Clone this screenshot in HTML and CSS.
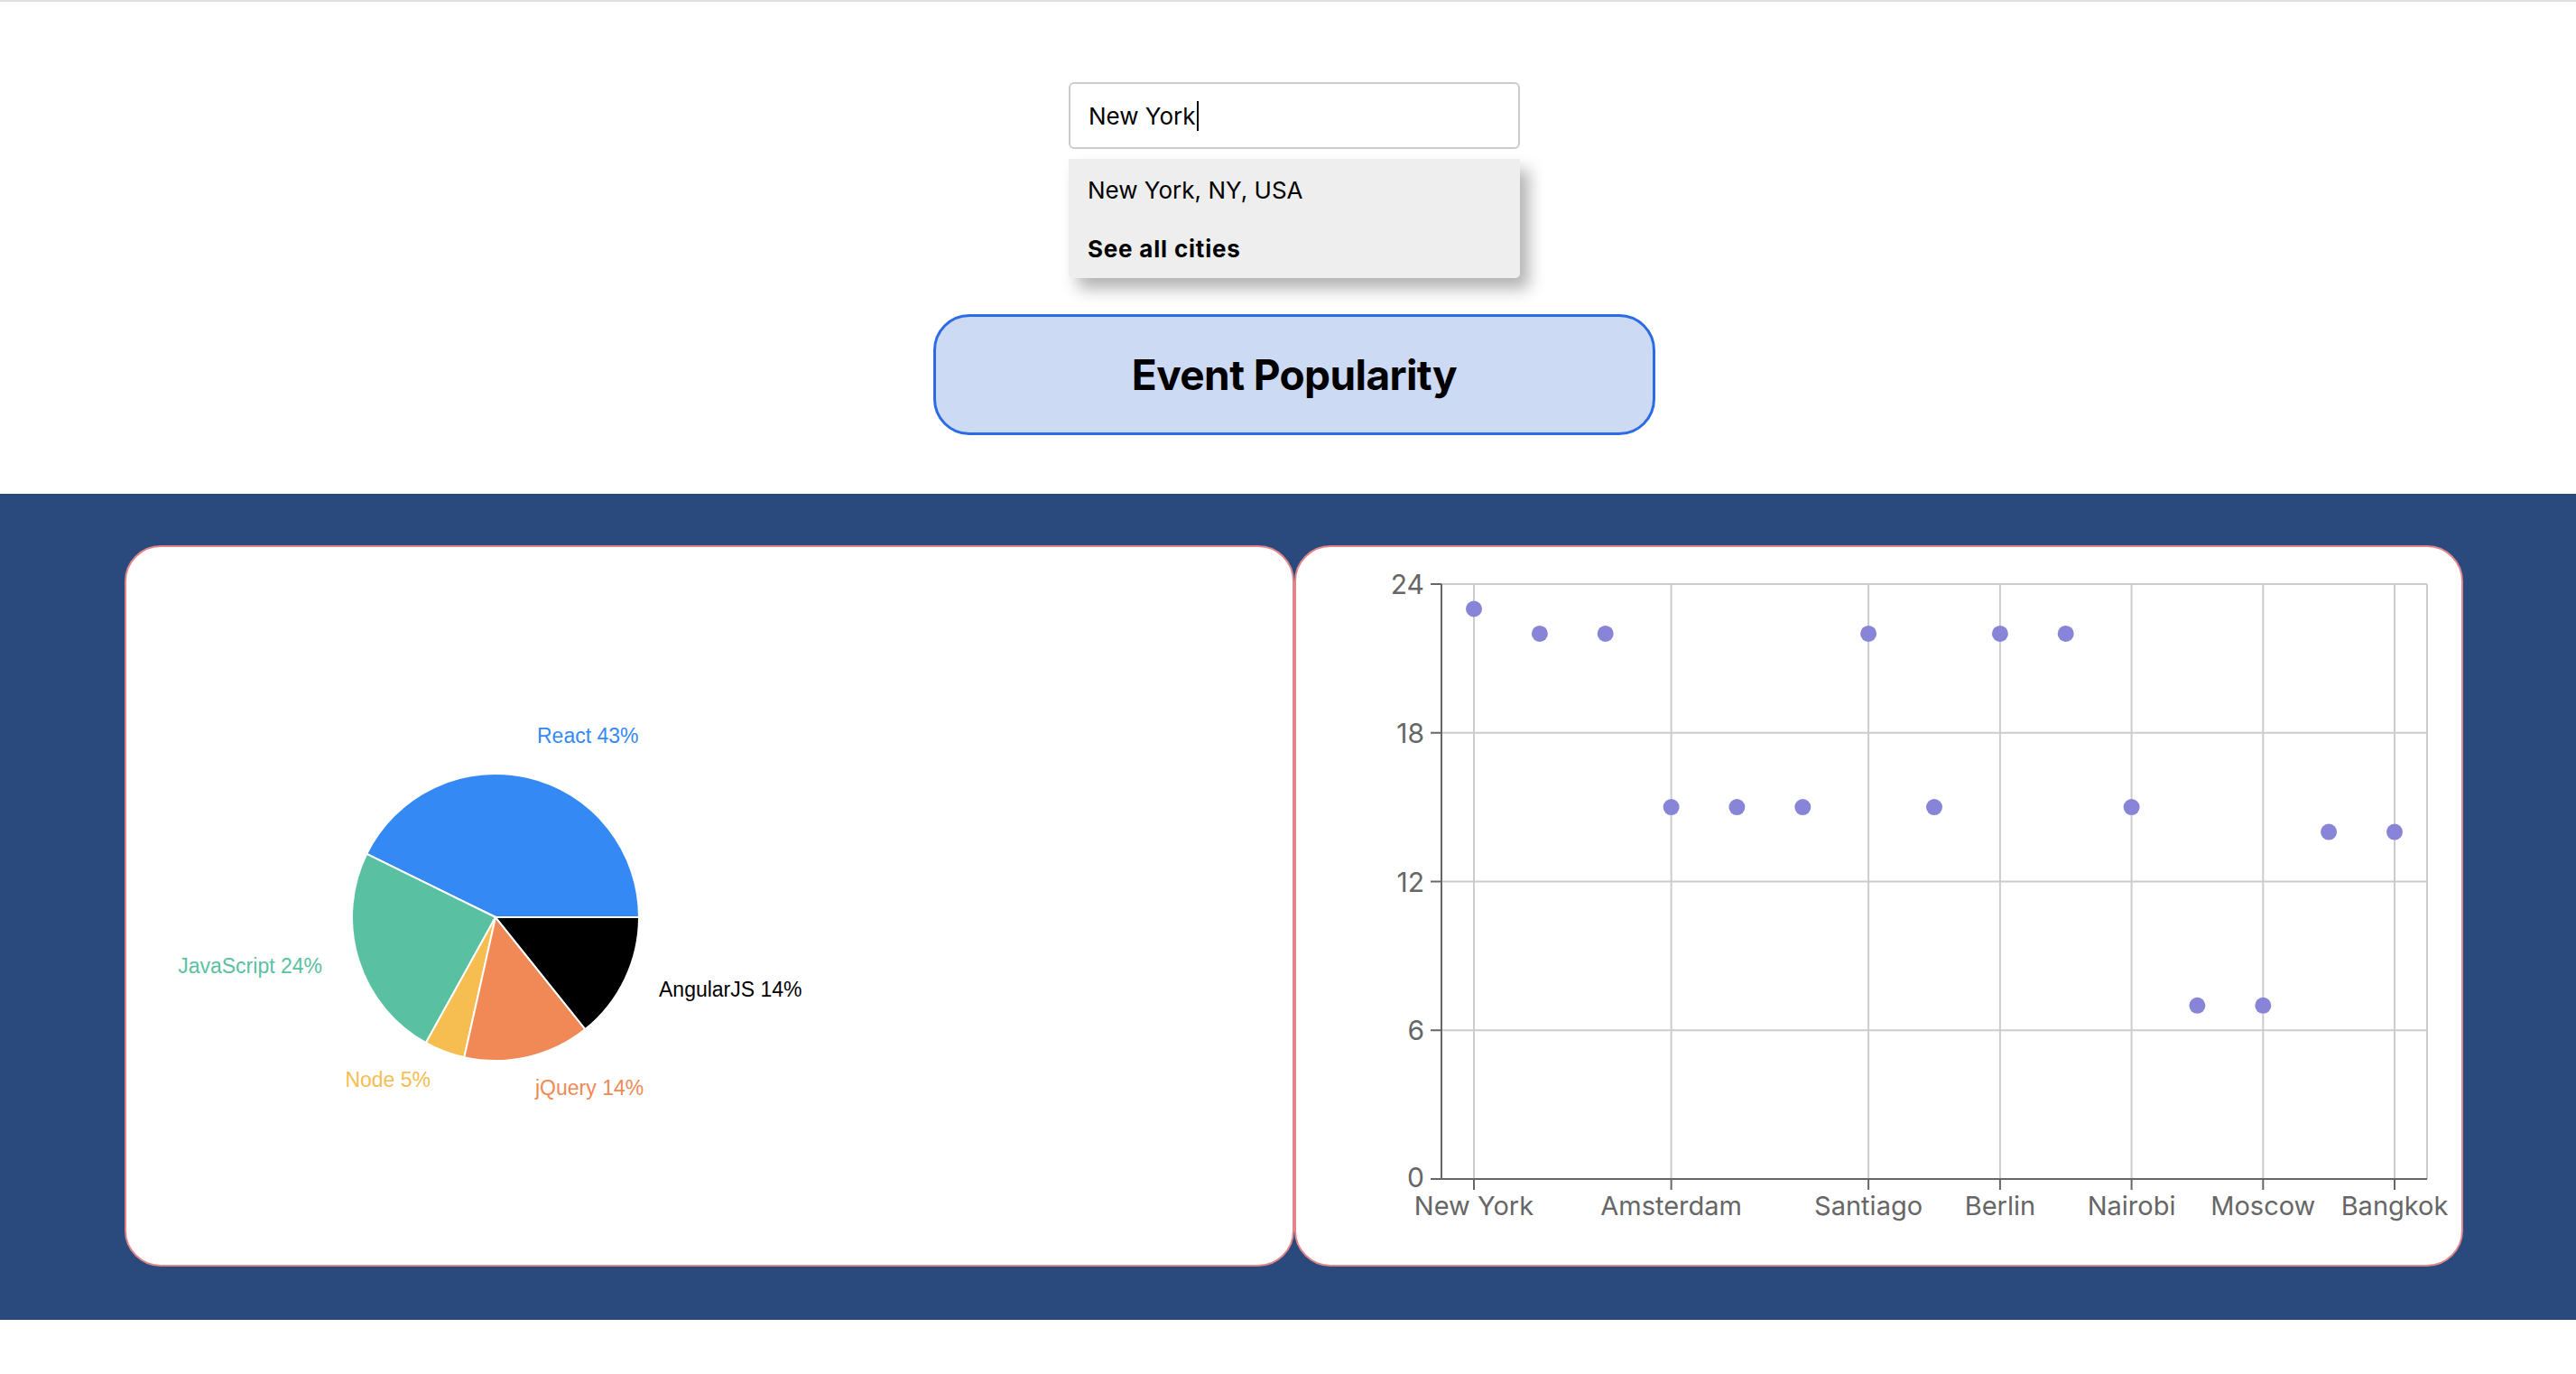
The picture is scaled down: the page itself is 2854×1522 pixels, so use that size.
FILE: index.html
```html
<!DOCTYPE html>
<html lang="en">
<head>
<meta charset="utf-8">
<title>Event Popularity</title>
<link rel="stylesheet" href="styles.css">
</head>
<body>
<header class="top">
  <div class="search">
    <div class="city-input" role="textbox"><span class="city-value">New York</span><span class="caret"></span></div>
    <ul class="suggestions">
      <li class="suggestion">New York, NY, USA</li>
      <li class="suggestion suggestion-all">See all cities</li>
    </ul>
  </div>
  <h1 class="title-box">Event Popularity</h1>
</header>
<main class="charts">
  <div class="card">
    <svg class="chart" width="1291" height="795" viewBox="0 0 1291 795">
      <g class="pie">
        <path class="slice-react" d="M409,410 L568,410 A159,159 0 0,0 266.3,339.8 Z"/>
        <path class="slice-js" d="M409,410 L266.3,339.8 A159,159 0 0,0 331.9,549.1 Z"/>
        <path class="slice-node" d="M409,410 L331.9,549.1 A159,159 0 0,0 374.3,565.2 Z"/>
        <path class="slice-jquery" d="M409,410 L374.3,565.2 A159,159 0 0,0 508.4,534.1 Z"/>
        <path class="slice-angular" d="M409,410 L508.4,534.1 A159,159 0 0,0 568,410 Z"/>
      </g>
      <g class="pie-labels">
        <text class="lbl-react" x="455" y="209" text-anchor="start">React 43%</text>
        <text class="lbl-js" x="217" y="464" text-anchor="end">JavaScript 24%</text>
        <text class="lbl-node" x="337" y="590" text-anchor="end">Node 5%</text>
        <text class="lbl-jquery" x="453" y="599" text-anchor="start">jQuery 14%</text>
        <text class="lbl-angular" x="590" y="490" text-anchor="start">AngularJS 14%</text>
      </g>
    </svg>
  </div>
  <div class="card">
    <svg class="chart" width="1292" height="795" viewBox="0 0 1292 795">
      <g class="grid">
        <line x1="161" y1="41" x2="1253" y2="41"/>
        <line x1="161" y1="205.75" x2="1253" y2="205.75"/>
        <line x1="161" y1="370.5" x2="1253" y2="370.5"/>
        <line x1="161" y1="535.25" x2="1253" y2="535.25"/>
        <line x1="197" y1="41" x2="197" y2="700"/>
        <line x1="415.6" y1="41" x2="415.6" y2="700"/>
        <line x1="634.1" y1="41" x2="634.1" y2="700"/>
        <line x1="779.9" y1="41" x2="779.9" y2="700"/>
        <line x1="925.6" y1="41" x2="925.6" y2="700"/>
        <line x1="1071.3" y1="41" x2="1071.3" y2="700"/>
        <line x1="1217" y1="41" x2="1217" y2="700"/>
        <line x1="1253" y1="41" x2="1253" y2="700"/>
      </g>
      <g class="axis">
        <line x1="161" y1="41" x2="161" y2="700"/>
        <line x1="161" y1="700" x2="1253" y2="700"/>
        <line x1="149" y1="41" x2="161" y2="41"/>
        <line x1="149" y1="205.75" x2="161" y2="205.75"/>
        <line x1="149" y1="370.5" x2="161" y2="370.5"/>
        <line x1="149" y1="535.25" x2="161" y2="535.25"/>
        <line x1="149" y1="700" x2="161" y2="700"/>
        <line x1="197" y1="700" x2="197" y2="712"/>
        <line x1="415.6" y1="700" x2="415.6" y2="712"/>
        <line x1="634.1" y1="700" x2="634.1" y2="712"/>
        <line x1="779.9" y1="700" x2="779.9" y2="712"/>
        <line x1="925.6" y1="700" x2="925.6" y2="712"/>
        <line x1="1071.3" y1="700" x2="1071.3" y2="712"/>
        <line x1="1217" y1="700" x2="1217" y2="712"/>
      </g>
      <g class="tick-labels">
        <text class="y-tick" x="142" y="41" text-anchor="end" dominant-baseline="central">24</text>
        <text class="y-tick" x="142" y="205.75" text-anchor="end" dominant-baseline="central">18</text>
        <text class="y-tick" x="142" y="370.5" text-anchor="end" dominant-baseline="central">12</text>
        <text class="y-tick" x="142" y="535.25" text-anchor="end" dominant-baseline="central">6</text>
        <text class="y-tick" x="142" y="698" text-anchor="end" dominant-baseline="central">0</text>
        <text x="197" y="740" text-anchor="middle">New York</text>
        <text x="415.6" y="740" text-anchor="middle">Amsterdam</text>
        <text x="634.1" y="740" text-anchor="middle">Santiago</text>
        <text x="779.9" y="740" text-anchor="middle">Berlin</text>
        <text x="925.6" y="740" text-anchor="middle">Nairobi</text>
        <text x="1071.3" y="740" text-anchor="middle">Moscow</text>
        <text x="1217" y="740" text-anchor="middle">Bangkok</text>
      </g>
      <g class="dots">
        <circle cx="197" cy="68.5" r="9"/>
        <circle cx="269.9" cy="95.9" r="9"/>
        <circle cx="342.7" cy="95.9" r="9"/>
        <circle cx="415.6" cy="288.1" r="9"/>
        <circle cx="488.4" cy="288.1" r="9"/>
        <circle cx="561.3" cy="288.1" r="9"/>
        <circle cx="634.1" cy="95.9" r="9"/>
        <circle cx="707" cy="288.1" r="9"/>
        <circle cx="779.9" cy="95.9" r="9"/>
        <circle cx="852.7" cy="95.9" r="9"/>
        <circle cx="925.6" cy="288.1" r="9"/>
        <circle cx="998.4" cy="507.8" r="9"/>
        <circle cx="1071.3" cy="507.8" r="9"/>
        <circle cx="1144.1" cy="315.6" r="9"/>
        <circle cx="1217" cy="315.6" r="9"/>
      </g>
    </svg>
  </div>
</main>
</body>
</html>
```

FILE: styles.css
```css
* { box-sizing: border-box; }

html, body {
  margin: 0;
  padding: 0;
}

body {
  font-family: Inter, "Noto Sans", sans-serif;
  color: #000;
  background: #fff;
  border-top: 2px solid #e0e0e0;
  min-height: 1522px;
}

.top {
  display: flex;
  flex-direction: column;
  align-items: center;
  padding: 89px 0 65px 14px;
}

.search {
  width: 500px;
}

.city-input {
  height: 74px;
  border: 2px solid #cccccc;
  border-radius: 6px;
  padding: 0 20px;
  display: flex;
  align-items: center;
  font-size: 26px;
  background: #fff;
}

.caret {
  display: inline-block;
  width: 2px;
  height: 33px;
  background: #000;
  margin-left: 1px;
}

.suggestions {
  list-style: none;
  margin: 11px 0 0;
  padding: 2px 0 0;
  background: #eeeeee;
  border-radius: 0 0 5px 5px;
  box-shadow: 10px 12px 18px rgba(0, 0, 0, 0.3);
}

.suggestion {
  padding: 0 21px;
  height: 65px;
  line-height: 65px;
  font-size: 26px;
}

.suggestion-all {
  font-weight: 700;
  letter-spacing: 0.8px;
}

.title-box {
  margin: 40px 0 0;
  width: 800px;
  height: 134px;
  border: 3px solid #2c6be3;
  border-radius: 40px;
  background: #ccdaf3;
  display: flex;
  align-items: center;
  justify-content: center;
  font-size: 46px;
  font-weight: 700;
  letter-spacing: -0.6px;
}

.charts {
  display: flex;
  background: #2a4a7e;
  padding: 57px 125px 59px 138px;
}

.card {
  flex: 1 1 0;
  height: 799px;
  border: 2px solid #e0868a;
  border-radius: 40px;
  background: #fff;
  overflow: hidden;
}

.chart {
  display: block;
}

.pie path {
  stroke: #fff;
  stroke-width: 2;
}

.slice-react { fill: #3589f4; }
.slice-js { fill: #59c1a2; }
.slice-node { fill: #f6bd50; }
.slice-jquery { fill: #f08955; }
.slice-angular { fill: #000; }

.pie-labels text {
  font-family: "Liberation Sans", Arial, sans-serif;
  font-size: 23px;
  dominant-baseline: central;
}

.lbl-react { fill: #3589f4; }
.lbl-js { fill: #59c1a2; }
.lbl-node { fill: #f6bd50; }
.lbl-jquery { fill: #f08955; }
.lbl-angular { fill: #000; }

.grid line {
  stroke: #cccccc;
  stroke-width: 2;
}

.axis line {
  stroke: #666666;
  stroke-width: 2;
}

.tick-labels text {
  font-family: Inter, "Noto Sans", sans-serif;
  font-size: 29px;
  fill: #666666;
}

.tick-labels .y-tick {
  font-size: 30px;
}

.dots circle {
  fill: #8884d8;
}
```
